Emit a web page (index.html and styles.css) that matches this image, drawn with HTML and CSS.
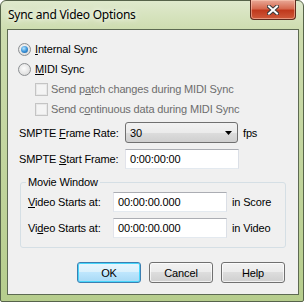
FILE: index.html
```html
<!DOCTYPE html>
<html lang="en">
<head>
    <meta charset="UTF-8">
    <title>Sync and Video Options</title>
    <link rel="stylesheet" href="styles.css">
</head>
<body>
    <div class="window">
        <div class="titlebar">
            <span class="title">Sync and Video Options</span>
            <div class="close">
                <svg width="12" height="10" viewBox="0 0 12 10">
                    <path d="M2 1.5 L10 8.5 M10 1.5 L2 8.5" stroke="#3a3a3a" stroke-width="4" stroke-linecap="square"/>
                    <path d="M2 1.5 L10 8.5 M10 1.5 L2 8.5" stroke="#fff" stroke-width="2" stroke-linecap="square"/>
                </svg>
            </div>
        </div>
        <div class="client">
            <div class="row">
                <span class="radio checked"></span>
                <span><u>I</u>nternal Sync</span>
            </div>
            <div class="row">
                <span class="radio"></span>
                <span><u>M</u>IDI Sync</span>
            </div>
            <div class="row sub disabled">
                <span class="check"></span>
                <span>Send p<u>a</u>tch changes during MIDI Sync</span>
            </div>
            <div class="row sub disabled">
                <span class="check"></span>
                <span>Send c<u>o</u>ntinuous data during MIDI Sync</span>
            </div>
            <div class="field rate">
                <span class="field-label">SMPTE <u>F</u>rame Rate:</span>
                <div class="combo">
                    <span>30</span>
                    <svg width="7" height="4" viewBox="0 0 7 4"><path d="M0 0h7L3.5 4z" fill="#000"/></svg>
                </div>
                <span class="unit">fps</span>
            </div>
            <div class="field start">
                <span class="field-label">SMPTE <u>S</u>tart Frame:</span>
                <div class="edit">0:00:00:00</div>
            </div>
            <div class="group">
                <div class="group-title">Movie Window</div>
                <div class="field first">
                    <span class="field-label"><u>V</u>ideo Starts at:</span>
                    <div class="edit">00:00:00.000</div>
                    <span class="unit">in Score</span>
                </div>
                <div class="field second">
                    <span class="field-label">Vi<u>d</u>eo Starts at:</span>
                    <div class="edit">00:00:00.000</div>
                    <span class="unit">in Video</span>
                </div>
            </div>
            <div class="buttons">
                <div class="btn default">OK</div>
                <div class="btn">Cancel</div>
                <div class="btn">Help</div>
            </div>
        </div>
    </div>
</body>
</html>
```

FILE: styles.css
```css
body {
    margin: 0;
    background: #fff;
    font-family: "Liberation Sans", Tahoma, sans-serif;
    font-size: 11px;
    letter-spacing: -0.15px;
    color: #000;
}

.window {
    width: 304px;
    height: 302px;
    box-sizing: border-box;
    border: 1px solid #56634a;
    border-radius: 6px 6px 2px 2px;
    background: linear-gradient(#dfe9cd, #cddcae 30px, #b6cd8d);
    display: flex;
    flex-direction: column;
}

.titlebar {
    height: 28px;
    display: flex;
    align-items: flex-start;
    padding-left: 7px;
}

.title {
    font-family: "Noto Sans", sans-serif;
    font-size: 12px;
    letter-spacing: -0.25px;
    line-height: 28px;
    text-shadow: 0 0 8px #fff, 0 0 4px #f4f8ec;
}

.close {
    margin-left: auto;
    margin-right: 7px;
    margin-top: -1px;
    width: 46px;
    height: 20px;
    box-sizing: border-box;
    border: 1px solid #5e2a1e;
    border-top: none;
    border-radius: 0 0 4px 4px;
    background: linear-gradient(#e9a997, #d66a50 45%, #c0391d 55%, #cf5a3b);
    box-shadow: inset 0 0 0 1px rgba(255, 210, 190, 0.5);
    display: flex;
    align-items: center;
    justify-content: center;
}

.client {
    flex: 1;
    margin: 0 4px 6px 6px;
    border: 1px solid #5d6a52;
    background: #f0f0f0;
    padding-top: 9px;
}

.row {
    height: 20px;
    display: flex;
    align-items: center;
    padding-left: 10px;
}

.row.sub {
    padding-left: 27px;
}

.disabled {
    color: #6d6d6d;
}

.radio {
    position: relative;
    width: 13px;
    height: 13px;
    box-sizing: border-box;
    border-radius: 50%;
    border: 1px solid #8c8f92;
    background: radial-gradient(circle at 45% 40%, #fdfdfd, #e6e6e6 55%, #cfcfcf);
    margin-right: 4px;
}

.radio.checked::after {
    content: "";
    position: absolute;
    left: 2px;
    top: 2px;
    width: 7px;
    height: 7px;
    border-radius: 50%;
    background: radial-gradient(circle at 40% 35%, #b8e6ff, #3d95da 50%, #185697);
}

.check {
    width: 13px;
    height: 13px;
    box-sizing: border-box;
    border: 1px solid #c4c4c4;
    background: #f4f4f4;
    box-shadow: inset 0 0 0 1px #e8e8e8;
    margin-right: 3px;
}

.field {
    display: flex;
    align-items: center;
    padding-left: 11px;
}

.field-label {
    width: 106px;
}

.rate {
    margin-top: 3px;
    height: 21px;
}

.combo {
    width: 113px;
    height: 21px;
    box-sizing: border-box;
    border: 1px solid #707070;
    border-radius: 3px;
    background: linear-gradient(#f2f2f2, #ebebeb 50%, #dddddd 50%, #cfcfcf);
    display: flex;
    align-items: center;
    justify-content: space-between;
    padding: 0 5px 0 4px;
}

.unit {
    margin-left: 5px;
}

.start {
    margin-top: 6px;
    height: 20px;
}

.edit {
    width: 114px;
    height: 20px;
    box-sizing: border-box;
    border: 1px solid;
    border-color: #abadb3 #dbdfe6 #e3e9ef #e2e3ea;
    background: #fff;
    padding-left: 4px;
    display: flex;
    align-items: center;
}

.group {
    margin: 13px 0 0 12px;
    width: 266px;
    box-sizing: border-box;
    border: 1px solid #d5dfe5;
    border-radius: 3px;
    padding: 0 0 9px 7px;
}

.group-title {
    margin: -8px 0 0 -2px;
    padding: 0 2px;
    width: fit-content;
    line-height: 14px;
    background: #f0f0f0;
}

.group .field {
    padding-left: 0;
    height: 20px;
}

.group .field-label {
    width: 85px;
}

.group .first {
    margin-top: 3px;
}

.group .second {
    margin-top: 6px;
}

.buttons {
    display: flex;
    justify-content: flex-end;
    gap: 8px;
    padding-right: 13px;
    margin-top: 14px;
}

.btn {
    width: 64px;
    height: 21px;
    box-sizing: border-box;
    border: 1px solid #707070;
    border-radius: 3px;
    background: linear-gradient(#f2f2f2, #ebebeb 50%, #dddddd 50%, #cfcfcf);
    box-shadow: inset 0 0 0 1px rgba(255, 255, 255, 0.7);
    display: flex;
    align-items: center;
    justify-content: center;
}

.btn.default {
    border-color: #3c7fb1;
    background: linear-gradient(#eaf6fd, #d9f0fc 50%, #bee6fd 50%, #a7d9f5);
    box-shadow: inset 0 0 0 1px #48d6fb;
}
```
